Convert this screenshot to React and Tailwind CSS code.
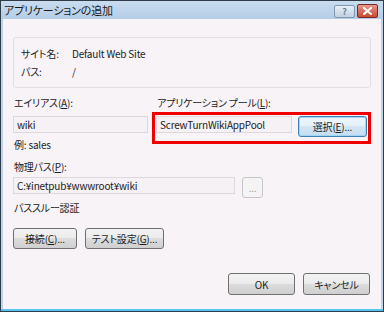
import React from "react";

function WinButton({ children, className = "", focused = false, disabled = false }) {
  const border = focused
    ? "border-[#3c7fb1]"
    : disabled
    ? "border-[#c8c4c8]"
    : "border-[#707070]";
  const bg = disabled
    ? "bg-[#f4f4f4]"
    : focused
    ? "bg-[linear-gradient(#eef6fc_0%,#e3f0f9_50%,#d2e6f4_50%,#c4ddef_100%)] shadow-[inset_0_0_0_1px_#9fd6f5]"
    : "bg-[linear-gradient(#f2f2f2_0%,#ebebeb_50%,#dddddd_50%,#cfcfcf_100%)]";
  return (
    <div
      className={`flex items-center justify-center whitespace-nowrap rounded-[3px] border ${border} ${bg} text-[10px] text-[#1e1e1e] ${className}`}
    >
      {children}
    </div>
  );
}

function Field({ children, className = "" }) {
  return (
    <div
      className={`flex items-center h-[17px] px-[3px] border border-[#dcd8dc] bg-[#f5f1f5] text-[10px] text-[#222] leading-none ${className}`}
    >
      {children}
    </div>
  );
}

export default function App() {
  return (
    <div
      className={`w-[384px] h-[312px] bg-[#303c48] p-px select-none font-['Noto_Sans_CJK_JP','Noto_Sans',sans-serif] [font-feature-settings:"palt"] tracking-[-0.2px]`}
    >
      <div className="h-full flex flex-col bg-[#bcd3ea] border-b-2 border-[#56c6f0]">
        {/* title bar */}
        <div className="h-[18px] flex items-center justify-between pl-[3px] pr-[5px] bg-[linear-gradient(#c9dcef,#b4cde6)]">
          <span className="text-[11px] text-[#1a1a1a] leading-none">アプリケーションの追加</span>
          <div className="flex items-center gap-[2px] pt-[2px]">
            <div className="w-[21px] h-[13px] rounded-[2px] border border-[#7f98b2] bg-[linear-gradient(#e8eff7,#c0d1e3)] flex items-center justify-center text-[9px] font-bold text-[#6a7f96] leading-none">
              ?
            </div>
            <div className="w-[21px] h-[14px] rounded-[2px] border border-[#7a2a22] bg-[linear-gradient(#e6978a,#c94a34)] flex items-center justify-center">
              <svg width="9" height="8" viewBox="0 0 9 8">
                <path d="M1 1 L8 7 M8 1 L1 7" stroke="#fff" strokeWidth="2" strokeLinecap="square" />
              </svg>
            </div>
          </div>
        </div>

        {/* body */}
        <div className="flex-1 mx-[2px] bg-[#f7f3f7] flex flex-col px-[10px] pt-[18px]">
          <div className="h-[51px] rounded-[3px] border border-[#e2dee2] flex flex-col justify-center gap-[4px] pl-[7px] text-[10px] text-[#222]">
            <div className="flex items-center h-[14px]">
              <span className="w-[51px]">サイト名:</span>
              <span>Default Web Site</span>
            </div>
            <div className="flex items-center h-[14px]">
              <span className="w-[51px]">パス:</span>
              <span>/</span>
            </div>
          </div>

          <div className="flex mt-[8px]">
            <div className="w-[136px] flex flex-col text-[10px] text-[#222]">
              <div className="h-[14px] leading-[14px] pl-px">
                エイリアス(<u>A</u>):
              </div>
              <Field className="mt-[6px]">wiki</Field>
              <div className="h-[14px] leading-[14px] mt-[5px] pl-px">例: sales</div>
            </div>
            <div className="ml-[4px] flex-1 flex flex-col">
              <div className="h-[14px] leading-[14px] pl-[5px] text-[10px] text-[#222]">
                アプリケーション プール(<u>L</u>):
              </div>
              <div className="mt-[2px] h-[32px] border-[3px] border-[#ee0000] flex items-start pt-px pl-px pr-px gap-[6px]">
                <Field className="w-[136px]">ScrewTurnWikiAppPool</Field>
                <WinButton focused className="w-[69px] h-[21px]">
                  選択(<u>E</u>)...
                </WinButton>
              </div>
            </div>
          </div>

          <div className="mt-[8px] h-[14px] leading-[14px] pl-px text-[10px] text-[#222]">
            物理パス(<u>P</u>):
          </div>
          <div className="flex items-start mt-[3px] gap-[7px]">
            <Field className="w-[222px]">C:¥inetpub¥wwwroot¥wiki</Field>
            <WinButton disabled className="w-[21px] h-[21px] text-[#a0a0a0]">
              ...
            </WinButton>
          </div>
          <div className="mt-[3px] h-[14px] leading-[14px] pl-px text-[10px] text-[#222]">
            パススルー認証
          </div>

          <div className="flex gap-[8px] mt-[13px]">
            <WinButton className="w-[64px] h-[21px]">
              接続(<u>C</u>)...
            </WinButton>
            <WinButton className="w-[79px] h-[21px]">
              テスト設定(<u>G</u>)...
            </WinButton>
          </div>

          <div className="flex justify-end gap-[8px] mt-[24px] pr-px">
            <WinButton className="w-[67px] h-[22px]">OK</WinButton>
            <WinButton className="w-[67px] h-[22px]">キャンセル</WinButton>
          </div>
        </div>
      </div>
    </div>
  );
}
